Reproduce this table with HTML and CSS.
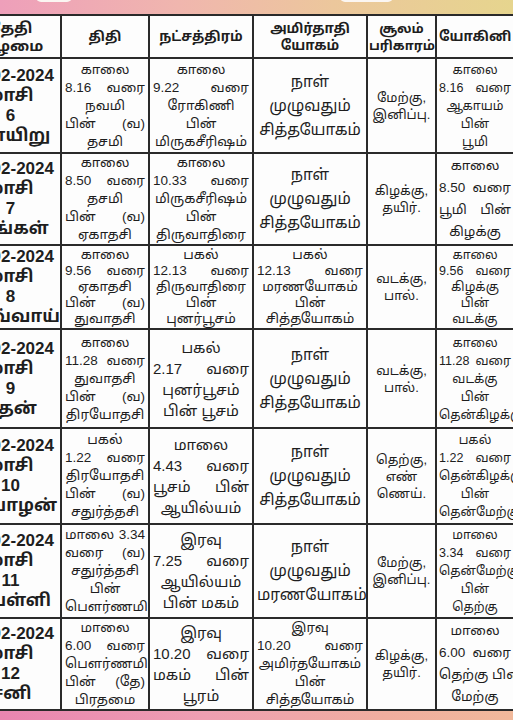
FILE: index.html
```html
<!DOCTYPE html>
<html lang="ta">
<head>
<meta charset="utf-8">
<link rel="stylesheet" href="styles.css">
</head>
<body>
<div class="page">
  <div class="top-band">
    <div class="tab tab-a"></div>
    <div class="tab tab-b"></div>
  </div>
  <table class="cal">
    <colgroup>
      <col class="c1"><col class="c2"><col class="c3"><col class="c4"><col class="c5"><col class="c6">
    </colgroup>
    <thead>
      <tr class="r0">
        <th class="day">தேதி<br>கிழமை</th>
        <th>திதி</th>
        <th>நட்சத்திரம்</th>
        <th>அமிர்தாதி<br>யோகம்</th>
        <th class="sm">சூலம்<br>பரிகாரம்</th>
        <th class="yh">யோகினி</th>
      </tr>
    </thead>
    <tbody>
      <tr class="r1">
        <td class="day">18-02-2024<br>மாசி<br>6<br>ஞாயிறு</td>
        <td>காலை<span class="j">8.16 வரை</span>நவமி<span class="j">பின் (வ)</span>தசமி</td>
        <td>காலை<span class="j">9.22 வரை</span>ரோகிணி<br>பின்<br>மிருகசீரிஷம்</td>
        <td class="big">நாள்<br>முழுவதும்<br>சித்தயோகம்</td>
        <td class="sm">மேற்கு,<br>இனிப்பு.</td>
        <td class="yg">காலை<span class="j">8.16 வரை</span>ஆகாயம்<br>பின்<br>பூமி</td>
      </tr>
      <tr class="r2">
        <td class="day">19-02-2024<br>மாசி<br>7<br>திங்கள்</td>
        <td>காலை<span class="j">8.50 வரை</span>தசமி<span class="j">பின் (வ)</span>ஏகாதசி</td>
        <td>காலை<span class="j">10.33 வரை</span>மிருகசீரிஷம்<br>பின்<br>திருவாதிரை</td>
        <td class="big">நாள்<br>முழுவதும்<br>சித்தயோகம்</td>
        <td class="sm">கிழக்கு,<br>தயிர்.</td>
        <td class="yg ym">காலை<span class="j">8.50 வரை</span><span class="j">பூமி பின்</span>கிழக்கு</td>
      </tr>
      <tr class="r3">
        <td class="day">20-02-2024<br>மாசி<br>8<br>செவ்வாய்</td>
        <td>காலை<span class="j">9.56 வரை</span>ஏகாதசி<span class="j">பின் (வ)</span>துவாதசி</td>
        <td>பகல்<span class="j">12.13 வரை</span>திருவாதிரை<br>பின்<br>புனர்பூசம்</td>
        <td>பகல்<span class="j">12.13 வரை</span>மரணயோகம்<br>பின்<br>சித்தயோகம்</td>
        <td class="sm">வடக்கு,<br>பால்.</td>
        <td class="yg">காலை<span class="j">9.56 வரை</span>கிழக்கு<br>பின்<br>வடக்கு</td>
      </tr>
      <tr class="r4">
        <td class="day">21-02-2024<br>மாசி<br>9<br>புதன்</td>
        <td>காலை<span class="j">11.28 வரை</span>துவாதசி<span class="j">பின் (வ)</span>திரயோதசி</td>
        <td class="mid">பகல்<span class="j">2.17 வரை</span>புனர்பூசம்<br>பின் பூசம்</td>
        <td class="big">நாள்<br>முழுவதும்<br>சித்தயோகம்</td>
        <td class="sm">வடக்கு,<br>பால்.</td>
        <td class="yg">காலை<span class="j">11.28 வரை</span>வடக்கு<br>பின்<br>தென்கிழக்கு</td>
      </tr>
      <tr class="r5">
        <td class="day">22-02-2024<br>மாசி<br>10<br>வியாழன்</td>
        <td>பகல்<span class="j">1.22 வரை</span>திரயோதசி<span class="j">பின் (வ)</span>சதுர்த்தசி</td>
        <td class="mid">மாலை<span class="j">4.43 வரை</span><span class="j">பூசம் பின்</span>ஆயில்யம்</td>
        <td class="big">நாள்<br>முழுவதும்<br>சித்தயோகம்</td>
        <td class="sm">தெற்கு,<br>எண்<br>ணெய்.</td>
        <td class="yg">பகல்<span class="j">1.22 வரை</span>தென்கிழக்கு<br>பின்<br>தென்மேற்கு</td>
      </tr>
      <tr class="r6">
        <td class="day">23-02-2024<br>மாசி<br>11<br>வெள்ளி</td>
        <td><span class="j">மாலை 3.34</span><span class="j">வரை (வ)</span>சதுர்த்தசி<br>பின்<br>பௌர்ணமி</td>
        <td class="mid">இரவு<span class="j">7.25 வரை</span>ஆயில்யம்<br>பின் மகம்</td>
        <td class="big">நாள்<br>முழுவதும்<br>மரணயோகம்</td>
        <td class="sm">மேற்கு,<br>இனிப்பு.</td>
        <td class="yg">மாலை<span class="j">3.34 வரை</span>தென்மேற்கு<br>பின்<br>தெற்கு</td>
      </tr>
      <tr class="r7">
        <td class="day">24-02-2024<br>மாசி<br>12<br>சனி</td>
        <td>மாலை<span class="j">6.00 வரை</span>பௌர்ணமி<span class="j">பின் (தே)</span>பிரதமை</td>
        <td class="mid">இரவு<span class="j">10.20 வரை</span><span class="j">மகம் பின்</span>பூரம்</td>
        <td>இரவு<span class="j">10.20 வரை</span>அமிர்தயோகம்<br>பின்<br>சித்தயோகம்</td>
        <td class="sm">கிழக்கு,<br>தயிர்.</td>
        <td class="yg ym">மாலை<span class="j">6.00 வரை</span><span class="j">தெற்கு பின்</span>மேற்கு</td>
      </tr>
    </tbody>
  </table>
  <div class="bottom-band"></div>
</div>
</body>
</html>
```

FILE: styles.css
```css
html, body {
  margin: 0;
  padding: 0;
  overflow: hidden;
  width: 513px;
  height: 720px;
}
body {
  font-family: "Liberation Sans", "Noto Sans Tamil", "Lohit Tamil", "Noto Sans", sans-serif;
  color: #1e1e1e;
  background: #fff;
}
.page {
  width: 513px;
  height: 720px;
  display: flex;
  flex-direction: column;
  overflow: hidden;
}
.top-band {
  position: relative;
  flex: 0 0 14px;
  background: linear-gradient(90deg, #ee9fba 0%, #f0b6ae 35%, #ecc79c 65%, #e6d58e 100%);
}
.tab {
  position: absolute;
  top: -8px;
  height: 10px;
  background: #fbf6f2;
  border-radius: 6px;
}
.tab-a { left: 36px; width: 36px; }
.tab-b { left: 340px; width: 53px; }
.cal {
  flex: 0 0 auto;
  margin-left: -41px;
  width: 556px;
  border-collapse: collapse;
  table-layout: fixed;
  background: #fdfdfd;
}
.c1 { width: 101px; }
.c2 { width: 88px; }
.c3 { width: 104px; }
.c4 { width: 114px; }
.c5 { width: 69px; }
.c6 { width: 80px; }
.cal th, .cal td {
  border: 2px solid #2a2a2a;
  text-align: center;
  vertical-align: middle;
  padding: 0 3px;
  font-size: 13.5px;
  line-height: 18px;
  font-weight: 400;
  overflow: hidden;
}
.cal th {
  font-weight: 700;
  font-size: 13.5px;
  line-height: 17px;
}
.cal th.yh {
  padding: 0 4px 0 2px;
}
.cal .day {
  font-weight: 700;
  font-size: 17px;
  line-height: 20px;
  white-space: nowrap;
  padding: 0;
}
.cal th.day {
  font-size: 15px;
  line-height: 18px;
}
.cal .big {
  font-size: 15.5px;
  line-height: 24px;
}
.cal .mid {
  font-size: 15px;
  line-height: 21px;
}
.cal .sm {
  font-size: 13px;
  line-height: 17px;
  padding: 0 1px;
}
.cal .yg {
  font-size: 12.5px;
  padding: 0 4px 0 2px;
  white-space: nowrap;
}
.cal .ym {
  font-size: 13.5px;
  line-height: 22px;
}
.j {
  display: block;
  text-align: justify;
  text-align-last: justify;
}
.r0 { height: 43px; }
.r1 { height: 95px; }
.r2 { height: 91px; }
.r3 { height: 84px; }
.r3 td { line-height: 16px; }
.r4 { height: 99px; }
.r5 { height: 96px; }
.r6 { height: 94px; }
.r7 { height: 92px; }
.bottom-band {
  flex: 1 1 auto;
  background: linear-gradient(90deg, #e985b0 0%, #ee9fb2 40%, #f0ae9f 75%, #f1b99b 100%);
}
```
